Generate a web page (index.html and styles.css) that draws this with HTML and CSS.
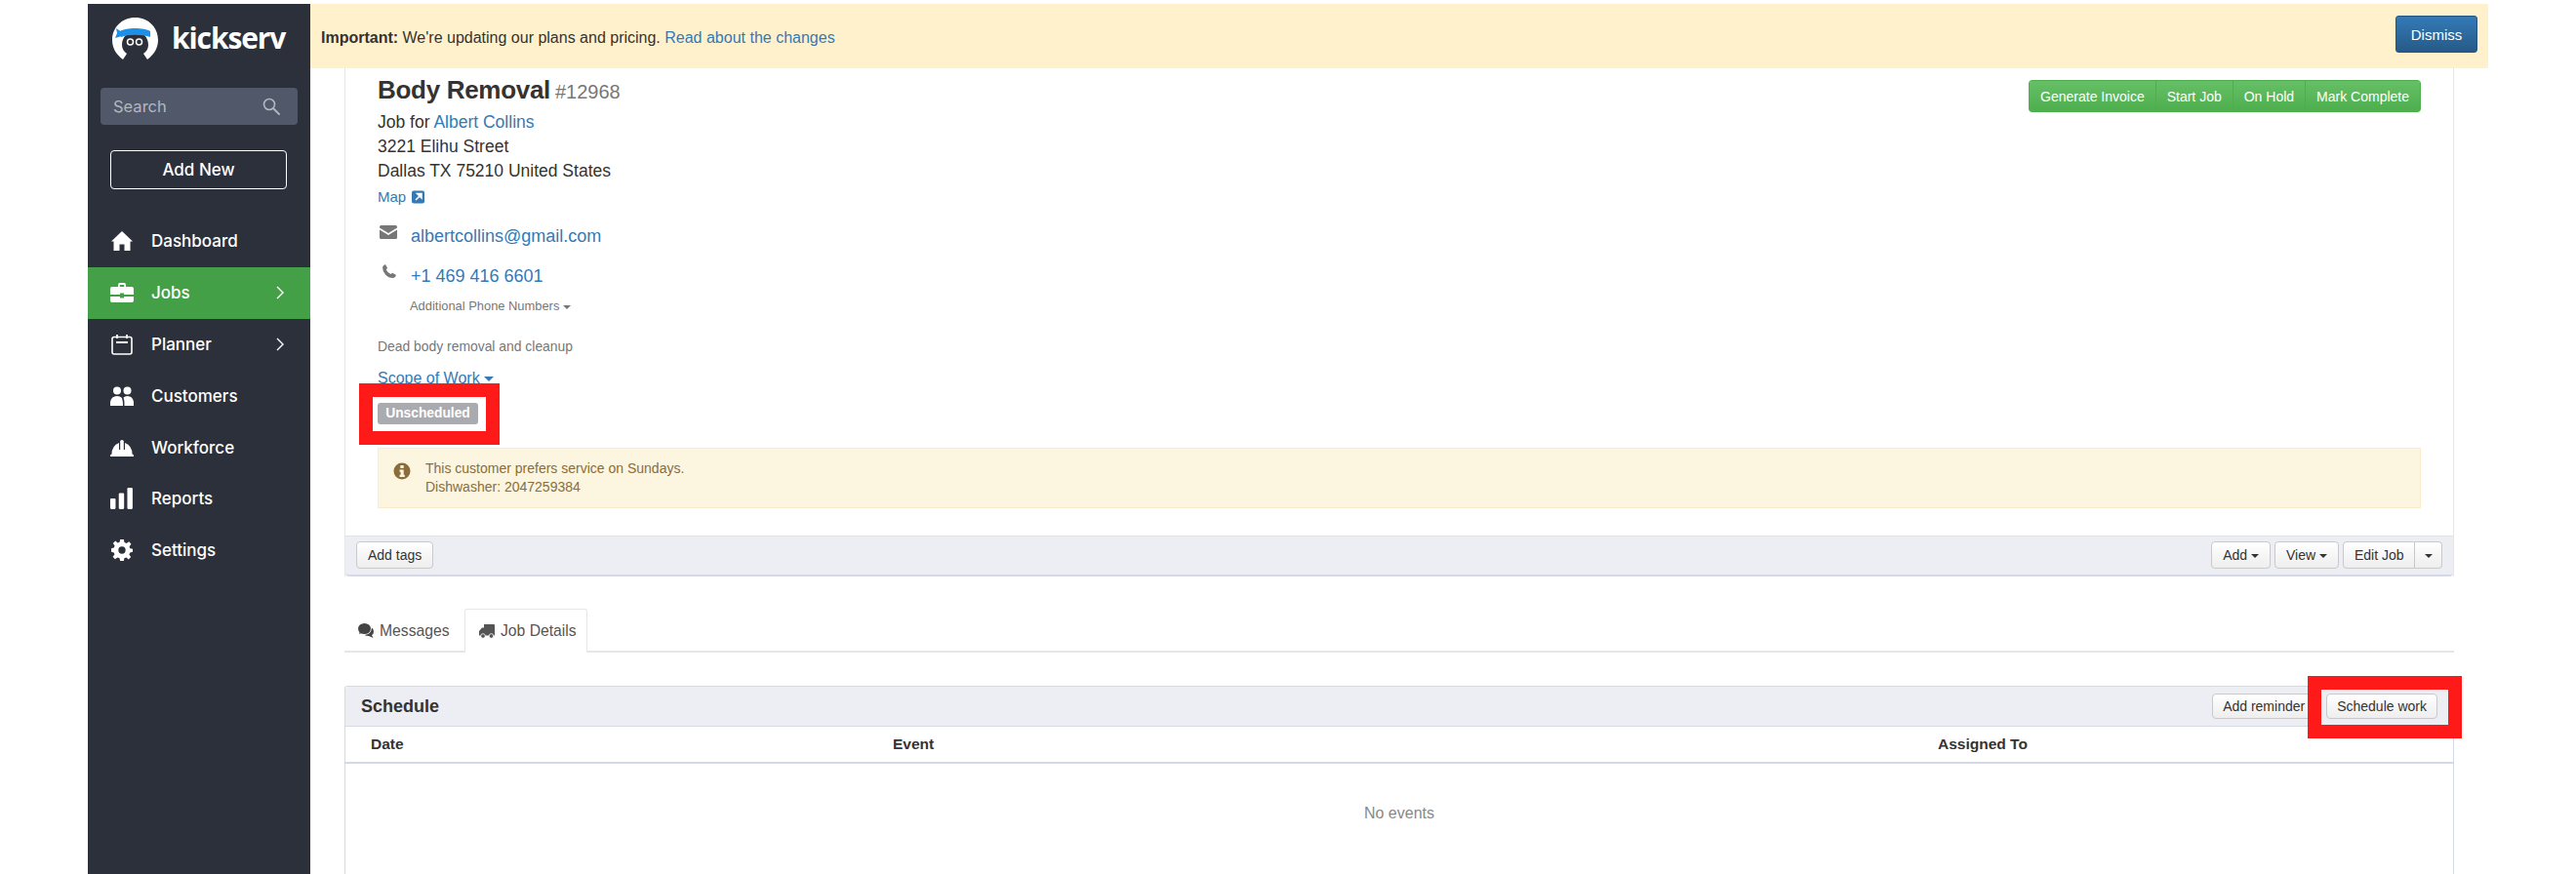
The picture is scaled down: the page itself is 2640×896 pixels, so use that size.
FILE: index.html
```html
<!DOCTYPE html>
<html lang="en">
<head>
<meta charset="utf-8">
<title>Kickserv - Body Removal</title>
<link rel="stylesheet" href="styles.css">
</head>
<body>
<div class="app">
  <aside class="sidebar">
    <div class="brand">
      <svg class="logo" viewBox="0 0 47 44">
        <path d="M11 43 C3 37 0 30 0 23 C0 10 10 0 23.500 0 C37 0 47 10 47 23 C47 30 44 37 36 43 L32 37 C35 35 37 32 37 28 C37 20 31 14 23.500 14 C16 14 10 20 10 28 C10 32 12 35 15 37 Z" fill="#fff"/>
        <path d="M8 14 C14 10 33 10 39 14 L39 20 C30 17 17 17 9 20 Z" fill="#1e90e8"/>
        <path d="M10 15 L4 11 L5 16 L3 21 L10 19 Z" fill="#1e90e8"/>
        <circle cx="18.500" cy="25" r="3" fill="none" stroke="#fff" stroke-width="1.500"/>
        <circle cx="27.500" cy="25" r="3" fill="none" stroke="#fff" stroke-width="1.500"/>
      </svg>
      <span class="wordmark">kickserv</span>
    </div>
    <div class="search">
      <span>Search</span>
      <svg class="search-icon" viewBox="0 0 18 18"><circle cx="7" cy="7" r="5.500" fill="none" stroke="currentColor" stroke-width="1.600"/><path d="M11 11l6 6" stroke="currentColor" stroke-width="1.800" stroke-linecap="round"/></svg>
    </div>
    <a class="add-new">Add New</a>
    <nav class="nav">
      <a class="nav-item">
        <svg class="nav-icon" viewBox="0 0 22 22"><path d="M11 1 L22 11.500 L19.500 11.500 L19.500 21 L13.500 21 L13.500 14.500 L8.500 14.500 L8.500 21 L2.500 21 L2.500 11.500 L0 11.500 Z" fill="#fff"/></svg>
        <span>Dashboard</span>
      </a>
      <a class="nav-item active">
        <svg class="nav-icon" viewBox="0 0 24 22"><path d="M8 5 V3 Q8 1 10 1 H14 Q16 1 16 3 V5 H14.200 V3 H9.800 V5 Z" fill="#fff"/><path d="M2 5 H22 Q24 5 24 7 V13 H14 V11.500 H10 V13 H0 V7 Q0 5 2 5 Z" fill="#fff"/><path d="M0 15 H10 V16.500 H14 V15 H24 V19 Q24 21 22 21 H2 Q0 21 0 19 Z" fill="#fff"/></svg>
        <span>Jobs</span>
        <svg class="chev" viewBox="0 0 8 14"><path d="M1 1l6 6-6 6" fill="none" stroke="#fff" stroke-width="1.400"/></svg>
      </a>
      <a class="nav-item">
        <svg class="nav-icon" viewBox="0 0 22 22"><rect x="1" y="3.500" width="20" height="17.500" rx="2" fill="none" stroke="#fff" stroke-width="1.600"/><path d="M6 1v4M16 1v4" stroke="#fff" stroke-width="1.800"/><path d="M5 9h12" stroke="#fff" stroke-width="2"/></svg>
        <span>Planner</span>
        <svg class="chev" viewBox="0 0 8 14"><path d="M1 1l6 6-6 6" fill="none" stroke="#fff" stroke-width="1.400"/></svg>
      </a>
      <a class="nav-item">
        <svg class="nav-icon" viewBox="0 0 24 20"><circle cx="7" cy="4.500" r="4" fill="#fff"/><circle cx="17.500" cy="4.500" r="4" fill="#fff"/><path d="M0 20 V16 Q1 10 7 10 Q10 10 12 12 Q13 15 13 20 Z" fill="#fff"/><path d="M14.500 20 Q15 15 13.500 11.500 Q15 10 17.500 10 Q23 10 24 16 V20 Z" fill="#fff"/></svg>
        <span>Customers</span>
      </a>
      <a class="nav-item">
        <svg class="nav-icon" viewBox="0 0 24 18"><path d="M0 18 Q-0.500 16 1.500 15.500 Q1.500 7 9 4 V11 H10.200 V2 Q12 0 13.800 2 V11 H15 V4 Q22.500 7 22.500 15.500 Q24.500 16 24 18 Z" fill="#fff"/></svg>
        <span>Workforce</span>
      </a>
      <a class="nav-item">
        <svg class="nav-icon" viewBox="0 0 22 20"><rect x="0" y="10" width="5" height="10" rx="1" fill="#fff"/><rect x="8" y="5" width="5" height="15" rx="1" fill="#fff"/><rect x="16" y="0" width="5" height="20" rx="1" fill="#fff"/></svg>
        <span>Reports</span>
      </a>
      <a class="nav-item">
        <svg class="nav-icon" viewBox="0 0 24 24"><path fill-rule="evenodd" d="M10 0 H14 L14.700 3.300 L17 4.300 L19.900 2.500 L22.300 5.200 L20.300 8 L21 10 L24 10.500 V14 L21 14.700 L20.100 17 L22 19.700 L19.400 22.300 L16.800 20.300 L14.600 21 L14 24 H10 L9.300 21 L7 20.100 L4.300 22 L1.700 19.400 L3.700 16.800 L3 14.600 L0 14 V10 L3 9.300 L3.900 7 L2 4.300 L4.600 1.700 L7.200 3.700 L9.400 3 Z M12 8 A4 4 0 1 0 12 16 A4 4 0 1 0 12 8 Z" fill="#fff"/></svg>
        <span>Settings</span>
      </a>
    </nav>
  </aside>

  <main class="main">
    <div class="banner">
      <p class="banner-text"><strong>Important:</strong> We're updating our plans and pricing. <a class="link">Read about the changes</a></p>
      <button class="btn-primary">Dismiss</button>
    </div>

    <div class="content">
      <section class="job-panel">
        <div class="job-body">
          <div class="job-head">
            <div class="job-info">
              <h1 class="job-title">Body Removal <small>#12968</small></h1>
              <div class="address">
                <div>Job for <a class="link">Albert Collins</a></div>
                <div>3221 Elihu Street</div>
                <div>Dallas TX 75210 United States</div>
              </div>
              <div class="map"><a class="link">Map</a>
                <svg class="ext-icon" viewBox="0 0 14 14"><rect width="13" height="13" y="0.500" rx="2" fill="#337ab7"/><path d="M4 10l4.500-4.500M5.500 3.500h4.500v4.500z" stroke="#fff" stroke-width="1.500" fill="#fff"/></svg>
              </div>
              <div class="contact contact-email">
                <svg class="mail-icon" viewBox="0 0 18 14"><path d="M1.500 0 H16.500 Q18 0 18 1.500 V2.500 L9 8 L0 2.500 V1.500 Q0 0 1.500 0 Z" fill="#777"/><path d="M0 4.500 L9 10 L18 4.500 V12.500 Q18 14 16.500 14 H1.500 Q0 14 0 12.500 Z" fill="#777"/></svg>
                <a class="link">albertcollins@gmail.com</a>
              </div>
              <div class="contact contact-phone">
                <svg class="phone-icon" viewBox="0 0 14 14"><path d="M3 0 L5 3.800 L3.800 5.500 Q5 8.500 8.500 10 L10.200 8.800 L14 11 Q13.500 13.500 11 14 Q6 14 3 10.500 Q0 7 0 3 Q0.500 0.800 3 0 Z" fill="#777"/></svg>
                <a class="link">+1 469 416 6601</a>
              </div>
              <div class="more-phones">Additional Phone Numbers <i class="caret"></i></div>
              <p class="desc">Dead body removal and cleanup</p>
              <div class="scope"><a class="link">Scope of Work</a> <i class="caret caret-blue"></i></div>
              <span class="badge">Unscheduled</span>
            </div>
            <div class="btn-group-green">
              <button class="btn-green">Generate Invoice</button>
              <button class="btn-green">Start Job</button>
              <button class="btn-green">On Hold</button>
              <button class="btn-green">Mark Complete</button>
            </div>
          </div>
          <div class="alert">
            <svg class="info-icon" viewBox="0 0 18 18"><circle cx="9" cy="9" r="8.500" fill="#8a6d3b"/><rect x="7.300" y="3" width="3.400" height="3" rx="0.600" fill="#fcf5e0"/><path d="M6.500 7.500 H10.700 V12.800 H11.800 V15 H6.500 V12.800 H7.600 V9.700 H6.500 Z" fill="#fcf5e0"/></svg>
            <div>This customer prefers service on Sundays.<br>Dishwasher: 2047259384</div>
          </div>
        </div>
        <div class="job-footer">
          <button class="btn">Add tags</button>
          <div class="footer-actions">
            <button class="btn">Add <i class="caret caret-dark"></i></button>
            <button class="btn">View <i class="caret caret-dark"></i></button>
            <div class="split">
              <button class="btn btn-left">Edit Job</button>
              <button class="btn btn-right"><i class="caret caret-dark"></i></button>
            </div>
          </div>
        </div>
      </section>

      <div class="tabs">
        <a class="tab">
          <svg class="tab-icon" viewBox="0 0 16 15"><ellipse cx="6.500" cy="5.500" rx="6.500" ry="5.500" fill="#444"/><path d="M2 8l-1 3 4-1.500z" fill="#444"/><path d="M14 4.500 Q16 6 16 8.500 Q16 11 14 12 L15.500 15 L11 13 Q8 13 6.500 12 Q13.500 11.500 14 4.500 Z" fill="#444"/></svg>
          Messages
        </a>
        <a class="tab tab-active">
          <svg class="tab-icon" viewBox="0 0 16 15"><path d="M5 0 H15 Q16 0 16 1 V11.500 H0 V7 L3 3.500 H5 Z" fill="#555"/><circle cx="4" cy="12" r="2.300" fill="#555" stroke="#fff" stroke-width="0.800"/><circle cx="12.500" cy="12" r="2.300" fill="#555" stroke="#fff" stroke-width="0.800"/></svg>
          Job Details
        </a>
      </div>

      <section class="schedule">
        <header class="schedule-head">
          <h2>Schedule</h2>
          <div class="schedule-actions">
            <button class="btn btn-sched">Add reminder</button>
            <button class="btn btn-sched">Schedule work</button>
          </div>
        </header>
        <div class="schedule-cols">
          <span class="col-date">Date</span>
          <span class="col-event">Event</span>
          <span>Assigned To</span>
        </div>
        <div class="no-events">No events</div>
      </section>
    </div>
  </main>
</div>
<div class="mark mark-badge"></div>
<div class="mark mark-schedule"></div>
</body>
</html>
```
FILE: styles.css
```css
* { box-sizing: border-box; }
html, body { margin: 0; height: 100%; background: #fff; overflow: hidden; }
body { position: relative; font-family: "Liberation Sans", Arial, sans-serif; color: #333; }
button { font-family: inherit; cursor: pointer; }
p, h1, h2 { margin: 0; }

.app { display: flex; height: 892px; margin: 4px 0 0 90px; width: 2460px; }

.sidebar { width: 228px; flex: none; background: #2b303b; font-family: Inter, sans-serif; color: #fff; overflow: hidden; }
.brand { display: flex; align-items: center; height: 70px; padding: 2px 0 0 25px; }
.logo { width: 47px; height: 44px; }
.wordmark { margin: -2px 0 0 14px; font-family: "Open Sans", sans-serif; font-weight: 700; font-size: 30px; letter-spacing: -1.100px; line-height: 1; }
.search { display: flex; align-items: center; justify-content: space-between; height: 38px; margin: 16px 13px 0; padding: 0 18px 0 13px; background: #515869; border-radius: 4px; color: #b3b7c1; font-size: 16.500px; }
.search-icon { width: 18px; height: 18px; }
.add-new { display: flex; align-items: center; justify-content: center; height: 40px; margin: 26px 24px 0 23px; border: 1.5px solid #fff; border-radius: 4px; font-size: 17px; font-weight: 500; }
.nav { margin-top: 27px; }
.nav-item { display: flex; align-items: center; height: 52.8px; padding: 0 27px 0 23px; font-size: 17px; font-weight: 500; }
.nav-item.active { background: #43a047; }
.nav-icon { width: 24px; height: 22px; flex: none; margin-right: 18px; }
.nav-item span { flex: 1; }
.chev { width: 8px; height: 14px; }

.main { flex: none; width: 2232px; }
.banner { display: flex; align-items: center; justify-content: space-between; height: 66px; padding: 0 11px; background: #fff1cc; font-size: 16px; }
.banner-text { color: #333; margin-top: 4px; }
.link { color: #337ab7; text-decoration: none; }
.btn-primary { width: 84px; height: 38px; margin-top: -4px; border: 1px solid #245580; border-radius: 3px; background: linear-gradient(#337ab7, #265a88); color: #fff; font-size: 15px; }

.content { padding: 0 35px; }
.job-panel { border: 1.5px solid #e6e6e6; border-top: 0; border-bottom: 0; }
.job-body { padding: 7px 33px 28px; }
.job-head { display: flex; justify-content: space-between; align-items: flex-start; }
.job-title { font-size: 26px; font-weight: 700; line-height: 30px; letter-spacing: -0.3px; color: #333; }
.job-title small { margin-left: -2px; font-size: 20px; font-weight: 400; color: #777; letter-spacing: 0; }
.address { margin-top: 4px; font-size: 17.500px; line-height: 25px; }
.map { display: flex; align-items: center; gap: 6px; height: 27px; font-size: 15px; }
.ext-icon { width: 14px; height: 14px; }
.contact { display: flex; align-items: center; height: 24px; font-size: 18px; }
.contact-email { margin-top: 15px; }
.contact-phone { margin-top: 17px; }
.mail-icon { width: 18px; height: 14px; margin: -8px 14px 0 2px; }
.phone-icon { width: 14px; height: 14px; margin: -10px 15px 0 5px; }
.more-phones { margin: 10px 0 0 33px; font-size: 12.900px; line-height: 18px; color: #777; }
.caret { display: inline-block; width: 0; height: 0; vertical-align: middle; border-top: 4px solid #777; border-left: 4px solid transparent; border-right: 4px solid transparent; }
.caret-blue { border-top-color: #337ab7; border-top-width: 5px; border-left-width: 5px; border-right-width: 5px; }
.caret-dark { border-top-color: #333; }
.desc { margin-top: 22px; font-size: 13.900px; line-height: 20px; color: #777; }
.scope { margin-top: 12px; font-size: 16px; line-height: 22px; }
.badge { display: block; width: 103px; height: 22px; margin-top: 14px; border-radius: 3px; background: #a9abb1; color: #fff; font-size: 13.800px; font-weight: 700; line-height: 22px; text-align: center; }

.btn-group-green { display: flex; margin-top: 5px; height: 33px; border-radius: 4px; overflow: hidden; }
.btn-green { height: 33px; padding: 0 11px; border: 1px solid #4cae4c; border-left-width: 0; background: linear-gradient(#66bf66, #4daf4d); color: #fff; font-size: 14px; white-space: nowrap; }
.btn-green:first-child { border-left-width: 1px; }

.alert { display: flex; gap: 15px; height: 62px; margin-top: 24px; padding: 11px 15px; background: #fcf5e0; border: 1px solid #faebcc; color: #8a6d3b; font-size: 14px; line-height: 19px; }
.info-icon { width: 18px; height: 18px; margin-top: 3px; flex: none; }

.job-footer { display: flex; justify-content: space-between; align-items: center; height: 42px; padding: 0 11px 1px 11px; background: #eceef4; border-top: 1px solid #dfe2ea; border-bottom: 2px solid #d5d9e6; border-radius: 0 0 4px 4px; }
.footer-actions { display: flex; gap: 4px; }
.btn { height: 28px; padding: 0 11px; border: 1px solid #c9c9c9; border-radius: 4px; background: linear-gradient(#fff, #eeeeee); color: #333; font-size: 14px; white-space: nowrap; }
.split { display: flex; }
.btn-left { border-radius: 4px 0 0 4px; width: 74px; }
.btn-right { border-radius: 0 4px 4px 0; border-left: 0; width: 28px; padding: 0; }

.tabs { display: flex; height: 45px; margin-top: 33px; padding-left: 0; border-bottom: 2px solid #e6e6e6; font-size: 15.700px; color: #555; white-space: nowrap; }
.tab { display: flex; align-items: center; gap: 6px; height: 45px; padding: 0 14px; }
.tab:first-child { width: 123px; padding-left: 14px; }
.tab-active { width: 126px; background: #fff; border: 1.5px solid #e6e6e6; border-bottom: 0; border-radius: 3px 3px 0 0; }
.tab-icon { width: 16px; height: 15px; flex: none; }

.schedule { margin-top: 34px; height: 194px; border: 1.5px solid #d5d9e6; border-bottom: 0; border-radius: 3px 3px 0 0; }
.schedule-head { display: flex; align-items: center; justify-content: space-between; height: 41px; padding: 0 16px; background: #eceef4; border-bottom: 1px solid #d5d9e6; }
.schedule-head h2 { font-size: 18px; font-weight: 700; }
.schedule-actions { display: flex; gap: 11px; }
.btn-sched { height: 26px; font-size: 14px; padding: 0 10px; }
.schedule-cols { display: flex; align-items: center; height: 38px; padding-left: 26px; border-bottom: 2.500px solid #d5d9e6; font-size: 15.500px; font-weight: 700; }
.col-date { width: 535px; }
.col-event { width: 1071px; }
.no-events { margin-top: 42px; text-align: center; font-size: 16px; color: #888; }

.mark { position: absolute; border: 14px solid #ff1a1a; }
.mark-badge { left: 368px; top: 393px; width: 144px; height: 63px; }
.mark-schedule { left: 2365px; top: 693px; width: 158px; height: 64px; }
```
